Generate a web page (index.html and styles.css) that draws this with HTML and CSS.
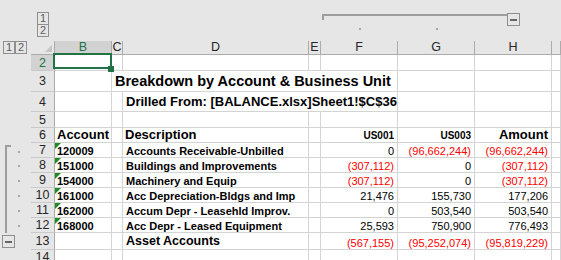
FILE: index.html
```html
<!DOCTYPE html>
<html lang="en">
<head>
  <meta charset="UTF-8" />
  <meta name="viewport" content="width=device-width, initial-scale=1.0" />
  <title>Breakdown by Account &amp; Business Unit</title>
  <link rel="stylesheet" href="styles.css">
</head>
<body>
  <div class="sheet">
    <!-- column outline band -->
    <div class="band"></div>
    <div class="band levels-v"><span class="lvl">1</span><span class="lvl">2</span></div>
    <div class="band span4"></div>
    <div class="band colgroup">
      <div class="obar"><div class="oline"></div><div class="obtn"><i></i></div></div>
      <div class="odots"><i></i><i></i></div>
    </div>
    <div class="band"></div>

    <!-- column headers -->
    <div class="gut levels-h"><span class="lvl">1</span><span class="lvl">2</span></div>
    <div class="hd corner"></div>
    <div class="hd on">B</div>
    <div class="hd">C</div>
    <div class="hd">D</div>
    <div class="hd">E</div>
    <div class="hd">F</div>
    <div class="hd">G</div>
    <div class="hd">H</div>
    <div class="hd"></div>

    <!-- row 2 -->
    <div class="gut"></div>
    <div class="rh on">2</div>
    <div class="c sel"></div>
    <div class="c"></div><div class="c"></div><div class="c"></div>
    <div class="c"></div><div class="c"></div><div class="c"></div><div class="c"></div>

    <!-- row 3 -->
    <div class="gut"></div>
    <div class="rh">3</div>
    <div class="c"></div>
    <div class="c span4 title">Breakdown by Account &amp; Business Unit</div>
    <div class="c"></div><div class="c"></div><div class="c"></div>

    <!-- row 4 -->
    <div class="gut"></div>
    <div class="rh">4</div>
    <div class="c"></div>
    <div class="c"></div>
    <div class="c span3 sub">Drilled From: [BALANCE.xlsx]Sheet1!$C$36</div>
    <div class="c"></div><div class="c"></div><div class="c"></div>

    <!-- row 5 -->
    <div class="gut"></div>
    <div class="rh">5</div>
    <div class="c"></div><div class="c"></div><div class="c"></div><div class="c"></div>
    <div class="c"></div><div class="c"></div><div class="c"></div><div class="c"></div>

    <!-- row 6 -->
    <div class="gut"></div>
    <div class="rh">6</div>
    <div class="c head">Account</div>
    <div class="c"></div>
    <div class="c head">Description</div>
    <div class="c"></div>
    <div class="c num unit">US001</div>
    <div class="c num unit">US003</div>
    <div class="c num head">Amount</div>
    <div class="c"></div>

    <!-- row 7 -->
    <div class="gut grp first"><i class="dot"></i></div>
    <div class="rh">7</div>
    <div class="c acct">120009</div>
    <div class="c"></div>
    <div class="c desc">Accounts Receivable-Unbilled</div>
    <div class="c"></div>
    <div class="c num">0</div>
    <div class="c num neg">(96,662,244)</div>
    <div class="c num neg">(96,662,244)</div>
    <div class="c"></div>

    <!-- row 8 -->
    <div class="gut grp"><i class="dot"></i></div>
    <div class="rh">8</div>
    <div class="c acct">151000</div>
    <div class="c"></div>
    <div class="c desc">Buildings and Improvements</div>
    <div class="c"></div>
    <div class="c num neg">(307,112)</div>
    <div class="c num">0</div>
    <div class="c num neg">(307,112)</div>
    <div class="c"></div>

    <!-- row 9 -->
    <div class="gut grp"><i class="dot"></i></div>
    <div class="rh">9</div>
    <div class="c acct">154000</div>
    <div class="c"></div>
    <div class="c desc">Machinery and Equip</div>
    <div class="c"></div>
    <div class="c num neg">(307,112)</div>
    <div class="c num">0</div>
    <div class="c num neg">(307,112)</div>
    <div class="c"></div>

    <!-- row 10 -->
    <div class="gut grp"><i class="dot"></i></div>
    <div class="rh">10</div>
    <div class="c acct">161000</div>
    <div class="c"></div>
    <div class="c desc">Acc Depreciation-Bldgs and Imp</div>
    <div class="c"></div>
    <div class="c num">21,476</div>
    <div class="c num">155,730</div>
    <div class="c num">177,206</div>
    <div class="c"></div>

    <!-- row 11 -->
    <div class="gut grp"><i class="dot"></i></div>
    <div class="rh">11</div>
    <div class="c acct">162000</div>
    <div class="c"></div>
    <div class="c desc">Accum Depr - Leasehld Improv.</div>
    <div class="c"></div>
    <div class="c num">0</div>
    <div class="c num">503,540</div>
    <div class="c num">503,540</div>
    <div class="c"></div>

    <!-- row 12 -->
    <div class="gut grp"><i class="dot"></i></div>
    <div class="rh">12</div>
    <div class="c acct">168000</div>
    <div class="c"></div>
    <div class="c desc">Acc Depr - Leased Equipment</div>
    <div class="c"></div>
    <div class="c num">25,593</div>
    <div class="c num">750,900</div>
    <div class="c num">776,493</div>
    <div class="c"></div>

    <!-- row 13 -->
    <div class="gut"><span class="mbtn"><i></i></span></div>
    <div class="rh">13</div>
    <div class="c"></div>
    <div class="c"></div>
    <div class="c total">Asset Accounts</div>
    <div class="c"></div>
    <div class="c num neg">(567,155)</div>
    <div class="c num neg">(95,252,074)</div>
    <div class="c num neg">(95,819,229)</div>
    <div class="c"></div>

    <!-- row 14 -->
    <div class="gut"></div>
    <div class="rh">14</div>
    <div class="c"></div><div class="c"></div><div class="c"></div><div class="c"></div>
    <div class="c"></div><div class="c"></div><div class="c"></div><div class="c"></div>
  </div>
</body>
</html>
```

FILE: styles.css
```css
html, body {
  margin: 0;
  height: 100%;
  overflow: hidden;
}
body {
  background: #e6e6e6;
  font-family: "Liberation Sans", Arial, sans-serif;
  color: #000;
}
.sheet {
  height: 100vh;
  display: grid;
  grid-template-columns: 31px 24px 57px 11px 186px 12px 77px 77px 77px 1fr;
  grid-template-rows: 41px 14px 16px 21px 20px 16px 15px repeat(6, 15px) 17px 1fr;
}
.sheet > div {
  box-sizing: border-box;
  min-width: 0;
}
.span4 {
  grid-column: span 4;
}
.span3 {
  grid-column: span 3;
}

/* outline band */
.band {
  background: #e6e6e6;
}
.levels-v {
  display: flex;
  flex-direction: column;
  align-items: center;
  padding-top: 12px;
}
.levels-h {
  display: flex;
  align-items: flex-start;
  padding-left: 3px;
}
.lvl {
  width: 12px;
  height: 13px;
  box-sizing: border-box;
  border: 1px solid #8f8f8f;
  color: #5c5c5c;
  font-size: 11px;
  line-height: 11px;
  text-align: center;
}
.levels-v .lvl + .lvl {
  margin-top: -1px;
}
.colgroup {
  grid-column: span 3;
  padding-top: 13px;
}
.obar {
  display: flex;
  align-items: flex-start;
}
.oline {
  flex: 1;
  margin: 1px 0 0 1px;
  height: 6px;
  border-top: 2px solid #9d9d9d;
  border-left: 2px solid #9d9d9d;
  box-sizing: border-box;
}
.obtn, .mbtn {
  width: 13px;
  height: 13px;
  box-sizing: border-box;
  border: 1px solid #8f8f8f;
  display: flex;
  align-items: center;
  justify-content: center;
}
.obtn {
  margin-right: 32px;
}
.obtn i, .mbtn i {
  width: 7px;
  height: 2px;
  background: #666;
}
.odots {
  display: grid;
  grid-template-columns: 77px 77px;
  margin-top: 2px;
}
.odots i, .dot {
  width: 2px;
  height: 2px;
  background: #a8a8a8;
  justify-self: center;
}

/* left gutter */
.gut {
  background: #e6e6e6;
}
.grp {
  margin-left: 5px;
  border-left: 2px solid #9d9d9d;
  padding-left: 11px;
  display: flex;
  align-items: center;
}
.first {
  margin-top: 2px;
  background: linear-gradient(#9d9d9d, #9d9d9d) 0 0 / 4px 2px no-repeat;
}
.mbtn {
  margin: 2px 0 0 2px;
}

/* headers */
.hd {
  background: #e6e6e6;
  border-right: 1px solid #ababab;
  border-bottom: 1px solid #ababab;
  font-size: 12.5px;
  line-height: 13px;
  text-align: center;
  color: #262626;
}
.hd.on {
  background: #d2d2d2;
  color: #217346;
}
.corner {
  display: flex;
  justify-content: flex-end;
  align-items: flex-end;
  padding: 0 2px 2px 0;
}
.corner::after {
  content: '';
  border-left: 7px solid transparent;
  border-bottom: 7px solid #c4c4c4;
}
.rh {
  background: #e6e6e6;
  border-right: 1px solid #ababab;
  border-bottom: 1px solid #cacaca;
  font-size: 12.5px;
  text-align: center;
  color: #262626;
  display: flex;
  align-items: center;
  justify-content: center;
}
.rh.on {
  background: #d2d2d2;
  color: #217346;
}

/* cells */
.c {
  background: #fff;
  border-right: 1px solid #d4d4d4;
  border-bottom: 1px solid #d4d4d4;
  display: flex;
  align-items: flex-end;
  padding: 0 2px;
  white-space: nowrap;
  font-size: 11px;
}
.num {
  justify-content: flex-end;
  padding-right: 3px;
}
.neg {
  color: #f00;
}
.title {
  font-size: 14.5px;
  font-weight: bold;
  padding: 0 3px 2px;
}
.sub {
  font-size: 13px;
  font-weight: bold;
  padding: 0 3px 2px;
}
.head {
  font-size: 13px;
  font-weight: bold;
}
.unit {
  font-size: 10px;
  font-weight: bold;
  padding-bottom: 1px;
}
.desc {
  font-weight: bold;
  padding-left: 3px;
}
.total {
  font-size: 12.5px;
  font-weight: bold;
  padding: 0 3px 1px;
}
.acct {
  font-weight: bold;
  position: relative;
  padding-left: 2px;
}
.acct::before {
  content: '';
  position: absolute;
  left: 0;
  top: 0;
  border-top: 6px solid #1f8b24;
  border-right: 6px solid transparent;
}
.sel {
  position: relative;
}
.sel::before {
  content: '';
  position: absolute;
  left: -2px;
  top: -2px;
  right: -1px;
  bottom: 1px;
  border: 2px solid #217346;
}
.sel::after {
  content: '';
  position: absolute;
  right: -3px;
  bottom: -2px;
  width: 6px;
  height: 6px;
  background: #217346;
}
```
